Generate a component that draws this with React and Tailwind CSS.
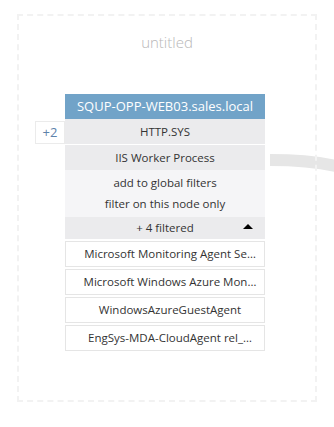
export default function App() {
  const services = [
    "Microsoft Monitoring Agent Se…",
    "Microsoft Windows Azure Mon…",
    "WindowsAzureGuestAgent",
    "EngSys-MDA-CloudAgent rel_…",
  ];

  return (
    <div
      className="relative h-[427px] w-[334px] overflow-hidden bg-white pl-[17px] pt-[14px]"
      style={{ fontFamily: '"Open Sans", "Noto Sans", sans-serif' }}
    >
      <svg
        className="absolute left-0 top-0"
        width="334"
        height="427"
        viewBox="0 0 334 427"
      >
        <path
          d="M270 160 C 300 160, 320 162, 340 167"
          stroke="#e6e6e6"
          strokeWidth="12"
          fill="none"
        />
      </svg>

      <div className="relative h-[388px] w-[300px] border-2 border-dashed border-[#f2f2f2]">
        <div className="pt-[15px] text-center text-[15px] font-light leading-[22px] text-[#b8b8b8]">
          untitled
        </div>

        <div className="relative ml-[46px] mt-[41px] w-[200px] text-[11.5px] text-[#333]">
          <div className="flex h-[25px] items-center justify-center bg-[#71a3c8] text-[13px] text-white">
            SQUP-OPP-WEB03.sales.local
          </div>
          <div className="flex h-[25px] items-center justify-center bg-[#ebebed]">
            HTTP.SYS
          </div>
          <div className="mt-px flex h-[25px] items-center justify-center bg-[#ebebed]">
            IIS Worker Process
          </div>
          <div className="flex flex-col items-center bg-[#f5f5f7] pb-[3px] pt-[2px] leading-[21px]">
            <span>add to global filters</span>
            <span>filter on this node only</span>
          </div>
          <div className="relative flex h-[22px] items-center justify-center bg-[#ebebed]">
            + 4 filtered
            <span className="absolute right-[12px] top-[7px] h-0 w-0 border-x-[5px] border-b-[5px] border-x-transparent border-b-black" />
          </div>
          <div className="flex flex-col gap-[2px] pt-[2px]">
            {services.map((name) => (
              <div
                key={name}
                className="h-[26px] whitespace-nowrap border border-[#e5e5e5] bg-white pl-[16px] pr-[6px] text-center leading-[24px]"
              >
                {name}
              </div>
            ))}
          </div>

          <div className="absolute left-[-30px] top-[27px] flex h-[23px] w-[30px] items-center justify-center border border-[#ebebeb] bg-white text-[13px] text-[#5d82ab]">
            +2
          </div>
        </div>
      </div>
    </div>
  );
}
